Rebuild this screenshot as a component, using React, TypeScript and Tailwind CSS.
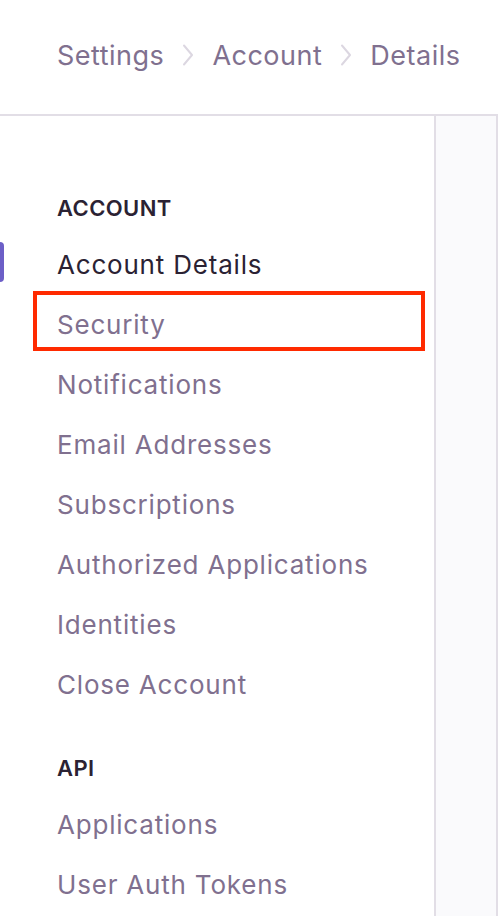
import { Fragment } from "react"

const sections = [
  {
    title: "ACCOUNT",
    items: [
      "Account Details",
      "Security",
      "Notifications",
      "Email Addresses",
      "Subscriptions",
      "Authorized Applications",
      "Identities",
      "Close Account",
    ],
  },
  {
    title: "API",
    items: ["Applications", "User Auth Tokens"],
  },
]

const Chevron = () => (
  <svg width="12" height="22" viewBox="0 0 12 22" fill="none" className="mx-[18px]">
    <path d="M2 1.5 L10 11 L2 20.5" stroke="#dcd7e1" strokeWidth="2" strokeLinecap="round" strokeLinejoin="round" />
  </svg>
)

const App = () => {
  const crumbs = ["Settings", "Account", "Details"]

  return (
    <div
      className="flex h-[916px] w-[498px] flex-col overflow-hidden bg-white text-[#80708f]"
      style={{ fontFamily: "Inter, 'Noto Sans', sans-serif" }}
    >
      <header className="flex h-[116px] shrink-0 items-center border-b-2 border-[#e2dee6] pb-[4px] pl-[57px]">
        {crumbs.map((c, i) => (
          <Fragment key={c}>
            {i > 0 && <Chevron />}
            <span className="text-[27px] leading-none tracking-[0.5px]">{c}</span>
          </Fragment>
        ))}
      </header>

      <div className="flex min-h-0 flex-1">
        <nav className="relative w-[436px] shrink-0 border-r-2 border-[#e2dee6] pt-[77px]">
          <div className="absolute left-0 top-[126px] h-[40px] w-[4px] rounded-r-[4px] bg-[#6c5fc7]" />
          {sections.map((s, si) => (
            <div key={s.title} className={si > 0 ? "mt-[39px]" : ""}>
              <div className="mb-[11px] flex h-[30px] items-center pl-[57px] text-[22px] font-semibold tracking-[0.4px] text-[#2b2233]">
                {s.title}
              </div>
              {s.items.map((item) => (
                <div key={item} className="relative flex h-[60px] items-center pl-[57px]">
                  <span
                    className={
                      item === "Account Details"
                        ? "text-[26px] tracking-[0.8px] text-[#2b2233]"
                        : "text-[26px] tracking-[0.8px]"
                    }
                  >
                    {item}
                  </span>
                  {item === "Security" && (
                    <div className="absolute left-[33px] top-[-3px] h-[60px] w-[392px] border-4 border-[#ff2a00]" />
                  )}
                </div>
              ))}
            </div>
          ))}
        </nav>
        <div className="flex flex-1 flex-col">
          <div className="flex flex-1 border-r-2 border-[#e2dee6] bg-[#fafafc]" />
        </div>
      </div>
    </div>
  )
}

export default App
